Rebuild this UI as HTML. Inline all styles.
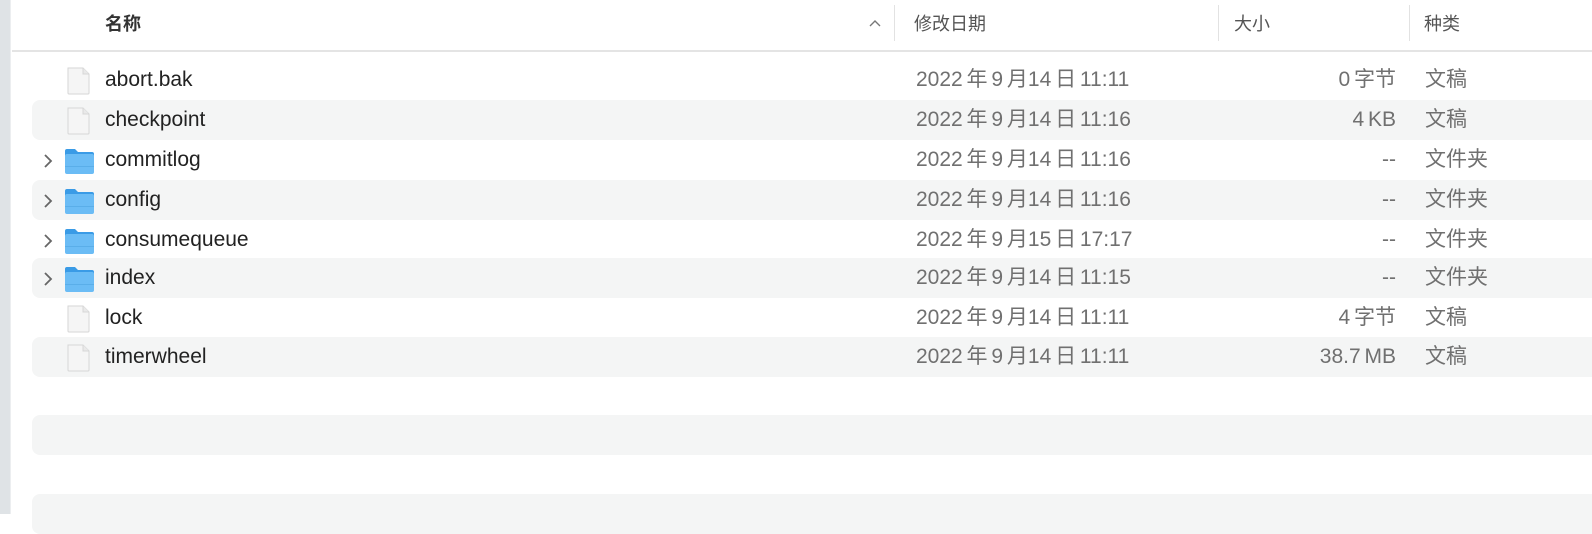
<!DOCTYPE html>
<html><head><meta charset="utf-8"><style>
*{margin:0;padding:0;box-sizing:border-box}
body{width:1592px;height:514px;overflow:hidden;background:#fff;position:relative;font-family:"Liberation Sans","Noto Sans CJK SC",sans-serif}
.strip{position:absolute;left:0;top:0;width:11px;height:514px;background:#dfe3e6;border-right:1px solid #eceef0}
.hdr{position:absolute;top:0;left:12px;right:0;height:52px;border-bottom:2px solid #e4e4e4}
.h{position:absolute;top:10px;font-size:18px;color:#555;}
.sep{position:absolute;top:5px;width:1px;height:36px;background:#e2e2e2}
.row{position:absolute;left:32px;right:0;height:40px;border-radius:8px 0 0 8px}
.s{background:#f4f5f5}
.t{position:absolute;font-size:21px;line-height:40px;top:0;white-space:pre}
.name{left:73px;color:#222}
.date{left:884px;color:#707070;word-spacing:-2px}
.size{right:196px;color:#707070;text-align:right;word-spacing:-2px}
.kind{left:1393px;color:#707070}
.ic{position:absolute;left:32px;top:7px}
.chev{position:absolute;left:10px;top:13px}
</style></head><body>
<div class="strip"></div>
<div class="hdr">
<div class="h" style="left:93px;font-weight:bold;color:#333">名称</div>
<svg style="position:absolute;left:856px;top:18px" width="14" height="10"><path d="M2 8 L7 3 L12 8" fill="none" stroke="#777" stroke-width="1.4"/></svg>
<div class="sep" style="left:882px"></div>
<div class="h" style="left:902px">修改日期</div>
<div class="sep" style="left:1206px"></div>
<div class="h" style="left:1222px">大小</div>
<div class="sep" style="left:1397px"></div>
<div class="h" style="left:1412px">种类</div>
</div>

<div id="rows"></div>
<script>
const F='<svg class="ic" width="28" height="28" viewBox="0 0 28 28"><path d="M4 1 H19 L25 7 V26 Q25 27 24 27 H5 Q4 27 4 26 Z" fill="#f5f5f5" stroke="#d6d6d6" stroke-width="1"/><path d="M19 1 V7 H25" fill="#e9e9e9" stroke="#d6d6d6" stroke-width="1"/></svg>';
const D='<svg class="chev" width="12" height="16"><path d="M3 2 L9 8 L3 14" fill="none" stroke="#666" stroke-width="1.8"/></svg><svg class="ic" style="left:32px;top:8px" width="31" height="27" viewBox="0 0 31 27"><path d="M1 3 Q1 1 3 1 H11 L14 4 H28 Q30 4 30 6 V10 H1 Z" fill="#3a9be6"/><rect x="1" y="6" width="29" height="20" rx="2" fill="#6bbcf5"/><rect x="1" y="18" width="29" height="1" fill="#5aaee9"/></svg>';
const rows=[
['abort.bak','2022 年 9 月14 日 11:11','0 字节','文稿',F],
['checkpoint','2022 年 9 月14 日 11:16','4 KB','文稿',F],
['commitlog','2022 年 9 月14 日 11:16','--','文件夹',D],
['config','2022 年 9 月14 日 11:16','--','文件夹',D],
['consumequeue','2022 年 9 月15 日 17:17','--','文件夹',D],
['index','2022 年 9 月14 日 11:15','--','文件夹',D],
['lock','2022 年 9 月14 日 11:11','4 字节','文稿',F],
['timerwheel','2022 年 9 月14 日 11:11','38.7 MB','文稿',F]];
let h='';
const tops=[60,100,140,180,220,258,298,337];
rows.forEach((r,i)=>{h+=`<div class="row${i%2?' s':''}" style="top:${tops[i]}px">${r[4]}<div class="t name">${r[0]}</div><div class="t date">${r[1]}</div><div class="t size">${r[2]}</div><div class="t kind">${r[3]}</div></div>`;});
h+='<div class="row s" style="top:415px"></div><div class="row s" style="top:494px"></div>';
document.getElementById('rows').innerHTML=h;
</script>
</body></html>
